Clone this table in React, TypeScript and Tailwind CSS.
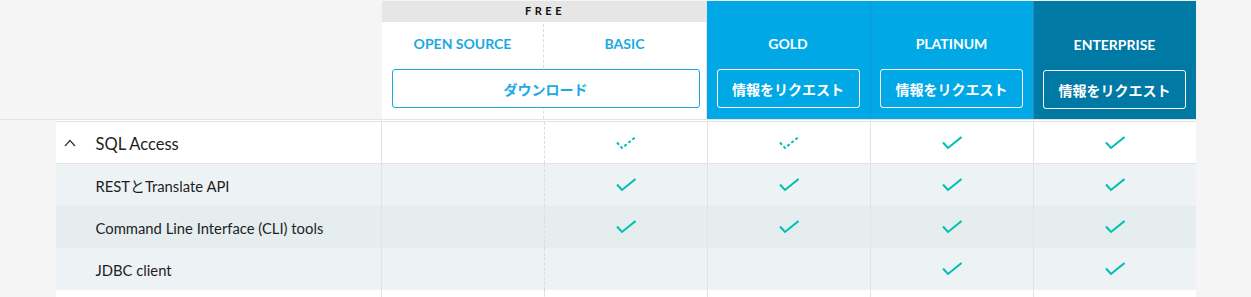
import React from "react";

type Mark = "none" | "check" | "partial";

const Check = ({ dashed }: { dashed?: boolean }) => (
  <svg width="20" height="14" viewBox="0 0 20 14" fill="none" stroke="#00bfb3" strokeWidth="2" strokeDasharray={dashed ? "3 2.2" : undefined}>
    <path d="M1 6.5l5 5.5L19.5 1" />
  </svg>
);

const Chevron = () => (
  <svg width="12" height="8" viewBox="0 0 12 8" fill="none" stroke="#333" strokeWidth="1.2">
    <path d="M1 7l5-5.5L11 7" />
  </svg>
);

const rows: { label: string; group?: boolean; bg: string; marks: Mark[] }[] = [
  { label: "SQL Access", group: true, bg: "bg-white", marks: ["none", "partial", "partial", "check", "check"] },
  { label: "RESTとTranslate API", bg: "bg-[#edf2f4]", marks: ["none", "check", "check", "check", "check"] },
  { label: "Command Line Interface (CLI) tools", bg: "bg-[#e6edef]", marks: ["none", "check", "check", "check", "check"] },
  { label: "JDBC client", bg: "bg-[#edf2f4]", marks: ["none", "none", "none", "check", "check"] },
];

const cellBorders = [
  "border-l border-[#e2e2e2]",
  "border-l border-dashed border-[#dcdcdc]",
  "border-l border-[#e2e2e2]",
  "border-l border-[#e2e2e2]",
  "border-l border-[#e2e2e2]",
];

const font = "font-['Lato','Noto_Sans_CJK_JP',sans-serif]";
const jp = "font-['Noto_Sans_CJK_JP','Lato',sans-serif]";

const PaidHead = ({ title, bg, border, offset }: { title: string; bg: string; border: string; offset: string }) => (
  <div className={`${bg} ${border} flex flex-col items-center`}>
    <div className={`${offset} h-[18px] text-[14px] leading-[18px] font-bold text-white`}>{title}</div>
    <div className="mt-[16px] w-[143px] h-[39px] rounded-[3px] border border-white flex items-center justify-center">
      <span className={`${jp} text-[14px] font-bold text-white leading-none`}>情報をリクエスト</span>
    </div>
  </div>
);

export default function App() {
  return (
    <div className={`w-full min-h-[297px] bg-[#f5f5f5] ${font}`}>
      <div className="mx-auto w-[1140px] pt-px">
        {/* Header */}
        <div className="grid grid-cols-[326px_325px_163px_163px_163px] h-[118px]">
          <div />
          <div className="bg-white flex flex-col border-r border-[#e2e2e2]">
            <div className="h-[21px] bg-[#e6e6e6] flex items-center justify-center text-[11px] font-bold tracking-[3.5px] text-[#111] pl-[3px]">
              FREE
            </div>
            <div className="relative flex-1 flex flex-col items-start">
              <div className="absolute left-[161px] top-[2px] bottom-0 border-l border-dashed border-[#dcdcdc]" />
              <div className="grid grid-cols-[162px_162px] w-full mt-[13px] h-[18px]">
                <div className="text-center text-[14px] leading-[18px] font-bold text-[#1ba9e1]">OPEN SOURCE</div>
                <div className="text-center text-[14px] leading-[18px] font-bold text-[#1ba9e1]">BASIC</div>
              </div>
              <div className="relative ml-[10px] mt-[16px] w-[308px] h-[39px] rounded-[3px] border border-[#1ba9e1] bg-white flex items-center justify-center">
                <span className={`${jp} text-[14px] font-bold text-[#1ba9e1] leading-none`}>ダウンロード</span>
              </div>
            </div>
          </div>
          <PaidHead title="GOLD" bg="bg-[#00a9e5]" border="" offset="mt-[34px]" />
          <PaidHead title="PLATINUM" bg="bg-[#00a9e5]" border="border-l border-[#1596c8]" offset="mt-[34px]" />
          <PaidHead title="ENTERPRISE" bg="bg-[#0079a5]" border="border-l border-[#2a8cb5]" offset="mt-[35px]" />
        </div>
        {/* header bottom lines */}
        <div className="ml-[-56px] w-[1196px] h-px bg-[#e4e4e4]" />
        <div className="h-px bg-white" />
        <div className="h-px bg-[#e4e4e4]" />

        {/* Body */}
        <div className="flex flex-col">
          {rows.map((r, i) => (
            <div
              key={i}
              className={`grid grid-cols-[325px_163px_163px_163px_163px_163px] ${r.bg} ${r.group ? "h-[42px] border-b border-[#e2e2e2]" : "h-[42px]"}`}
            >
              <div className="flex items-center">
                {r.group ? (
                  <>
                    <span className="ml-[8px] flex items-center"><Chevron /></span>
                    <span className="ml-[20px] pt-[4px] text-[16.5px] text-[#1e1e1e]">{r.label}</span>
                  </>
                ) : (
                  <span className="ml-[40px] pt-[2px] text-[14.8px] text-[#1e1e1e]">{r.label}</span>
                )}
              </div>
              {r.marks.map((m, j) => (
                <div key={j} className={`${cellBorders[j]} flex items-center justify-center`}>
                  {m === "check" && <Check />}
                  {m === "partial" && <Check dashed />}
                </div>
              ))}
            </div>
          ))}
          <div className="grid grid-cols-[325px_163px_163px_163px_163px_163px] h-[10px] bg-white">
            <div />
            {cellBorders.map((b, j) => (
              <div key={j} className={b} />
            ))}
          </div>
        </div>
      </div>
    </div>
  );
}
